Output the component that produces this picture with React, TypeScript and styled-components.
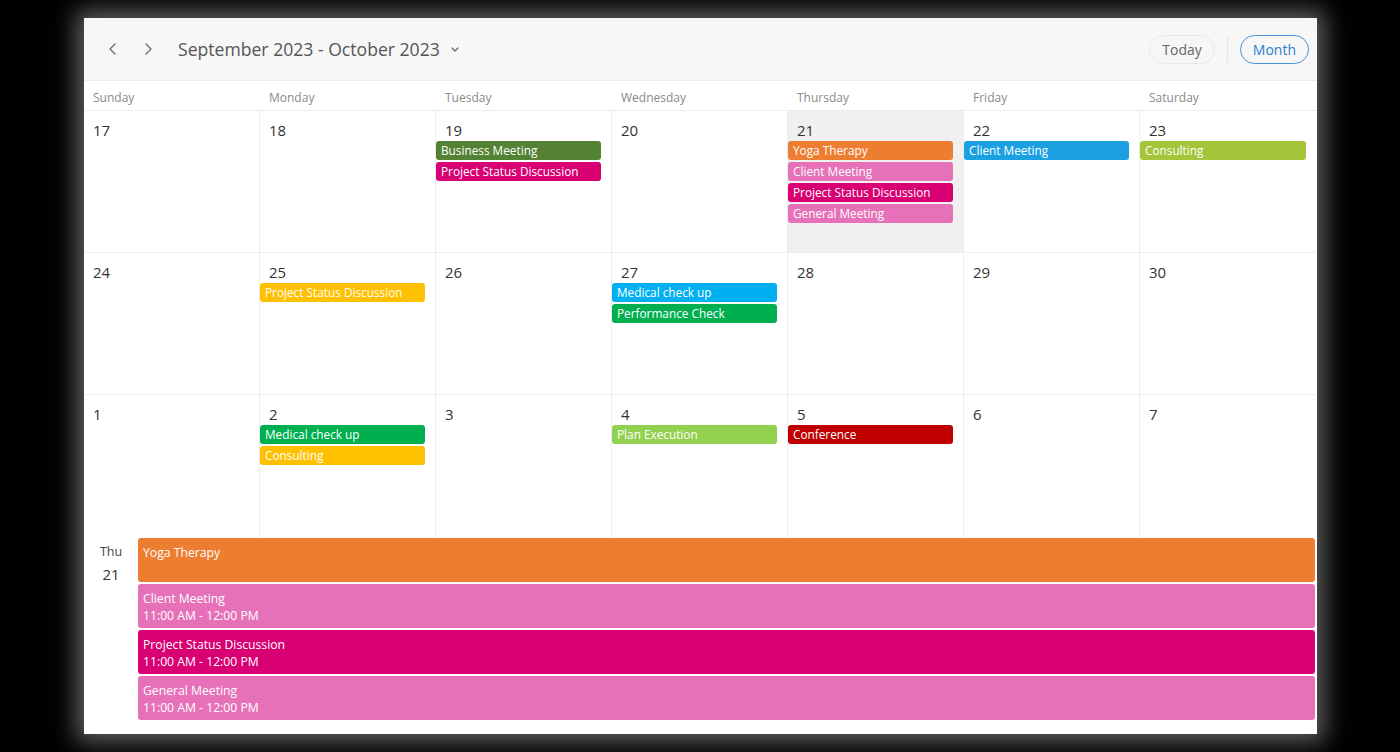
import React from 'react';
import styled, { createGlobalStyle } from 'styled-components';

type CalEvent = { title: string; color: string };
type Day = { date: number; events?: CalEvent[]; today?: boolean };

const C = {
  olive: '#548235',
  magenta: '#d80073',
  orange: '#ed7d31',
  pink: '#e671b8',
  sky: '#1ba1e2',
  lime: '#a4c439',
  amber: '#ffc000',
  cyan: '#00b0f0',
  green: '#00b050',
  light: '#92d050',
  red: '#c00000',
};

const weekDays = ['Sunday', 'Monday', 'Tuesday', 'Wednesday', 'Thursday', 'Friday', 'Saturday'];

const weeks: Day[][] = [
  [
    { date: 17 },
    { date: 18 },
    {
      date: 19,
      events: [
        { title: 'Business Meeting', color: C.olive },
        { title: 'Project Status Discussion', color: C.magenta },
      ],
    },
    { date: 20 },
    {
      date: 21,
      today: true,
      events: [
        { title: 'Yoga Therapy', color: C.orange },
        { title: 'Client Meeting', color: C.pink },
        { title: 'Project Status Discussion', color: C.magenta },
        { title: 'General Meeting', color: C.pink },
      ],
    },
    { date: 22, events: [{ title: 'Client Meeting', color: C.sky }] },
    { date: 23, events: [{ title: 'Consulting', color: C.lime }] },
  ],
  [
    { date: 24 },
    { date: 25, events: [{ title: 'Project Status Discussion', color: C.amber }] },
    { date: 26 },
    {
      date: 27,
      events: [
        { title: 'Medical check up', color: C.cyan },
        { title: 'Performance Check', color: C.green },
      ],
    },
    { date: 28 },
    { date: 29 },
    { date: 30 },
  ],
  [
    { date: 1 },
    {
      date: 2,
      events: [
        { title: 'Medical check up', color: C.green },
        { title: 'Consulting', color: C.amber },
      ],
    },
    { date: 3 },
    { date: 4, events: [{ title: 'Plan Execution', color: C.light }] },
    { date: 5, events: [{ title: 'Conference', color: C.red }] },
    { date: 6 },
    { date: 7 },
  ],
];

const agenda = [
  { title: 'Yoga Therapy', color: C.orange },
  { title: 'Client Meeting', time: '11:00 AM - 12:00 PM', color: C.pink },
  { title: 'Project Status Discussion', time: '11:00 AM - 12:00 PM', color: C.magenta },
  { title: 'General Meeting', time: '11:00 AM - 12:00 PM', color: C.pink },
];

function Chevron({ dir }: { dir: 'left' | 'right' | 'down' }) {
  const points =
    dir === 'left' ? '9,3 4,8 9,13' : dir === 'right' ? '5,3 10,8 5,13' : '4,6 7,9 10,6';
  const size = dir === 'down' ? 14 : 16;
  return (
    <svg width={size} height={size} viewBox={`0 0 ${size} ${size}`} fill="none">
      <polyline points={points} stroke="#666" strokeWidth="1.2" strokeLinecap="round" strokeLinejoin="round" />
    </svg>
  );
}

export default function App() {
  return (
    <>
      <GlobalStyle />
      <Page>
        <Card>
          <Toolbar>
            <NavButton>
              <Chevron dir="left" />
            </NavButton>
            <NavButton>
              <Chevron dir="right" />
            </NavButton>
            <Title>September 2023 - October 2023</Title>
            <Caret>
              <Chevron dir="down" />
            </Caret>
            <Spacer />
            <PillButton>Today</PillButton>
            <Divider />
            <PillButton active>Month</PillButton>
          </Toolbar>

          <DayNames>
            {weekDays.map((d) => (
              <DayName key={d}>{d}</DayName>
            ))}
          </DayNames>

          <MonthGrid>
            {weeks.flat().map((day, i) => (
              <Cell key={i} today={day.today} lastCol={i % 7 === 6} lastRow={i >= 14}>
                <DateNum>{day.date}</DateNum>
                {day.events?.map((ev, j) => (
                  <Chip key={j} color={ev.color}>
                    {ev.title}
                  </Chip>
                ))}
              </Cell>
            ))}
          </MonthGrid>

          <Agenda>
            <AgendaDate>
              <span>Thu</span>
              <AgendaDay>21</AgendaDay>
            </AgendaDate>
            <AgendaList>
              {agenda.map((ev, i) => (
                <AgendaItem key={i} color={ev.color}>
                  <div>{ev.title}</div>
                  {ev.time && <div>{ev.time}</div>}
                </AgendaItem>
              ))}
            </AgendaList>
          </Agenda>
        </Card>
      </Page>
    </>
  );
}

const GlobalStyle = createGlobalStyle`
  html, body {
    margin: 0;
    padding: 0;
    background: #000;
    font-family: "Segoe UI", "Open Sans", "Noto Sans", sans-serif;
  }
  * { box-sizing: border-box; }
`;

const Page = styled.div`
  width: 1400px;
  height: 752px;
  padding: 18px 83px 18px 84px;
  background: #000;
  overflow: hidden;
`;

const Card = styled.div`
  width: 1233px;
  height: 716px;
  background: #fff;
  display: flex;
  flex-direction: column;
  box-shadow: 0 0 22px 8px rgba(190, 190, 190, 0.5);
`;

const Toolbar = styled.div`
  height: 63px;
  flex: none;
  background: #f7f7f7;
  border-bottom: 1px solid #ececec;
  display: flex;
  align-items: center;
  padding: 0 8px 0 16px;
`;

const NavButton = styled.div`
  width: 28px;
  height: 28px;
  margin-right: 7px;
  display: flex;
  align-items: center;
  justify-content: center;
`;

const Title = styled.div`
  margin-left: 8px;
  font-size: 17.6px;
  color: #555;
`;

const Caret = styled.div`
  margin-left: 8px;
  display: flex;
  align-items: center;
`;

const Spacer = styled.div`
  flex: 1;
`;

const PillButton = styled.div<{ active?: boolean }>`
  height: 29px;
  padding: 0 12px;
  border-radius: 15px;
  display: flex;
  align-items: center;
  font-size: 14px;
  color: ${(p) => (p.active ? '#2b7fd0' : '#666')};
  border: 1px solid ${(p) => (p.active ? '#4a92d6' : '#e8e8e8')};
`;

const Divider = styled.div`
  width: 1px;
  height: 26px;
  background: #e4e4e4;
  margin: 0 12px;
`;

const DayNames = styled.div`
  height: 30px;
  flex: none;
  display: grid;
  grid-template-columns: repeat(7, 176px);
  border-bottom: 1px solid #ececec;
`;

const DayName = styled.div`
  padding: 3px 0 0 9px;
  display: flex;
  align-items: center;
  font-size: 12px;
  color: #8a8a8a;
`;

const MonthGrid = styled.div`
  flex: none;
  display: grid;
  grid-template-columns: repeat(7, 176px);
  grid-template-rows: repeat(3, 142px);
`;

const Cell = styled.div<{ today?: boolean; lastCol?: boolean; lastRow?: boolean }>`
  background: ${(p) => (p.today ? '#f0f0f0' : '#fff')};
  border-right: ${(p) => (p.lastCol ? 'none' : '1px solid #ededed')};
  border-bottom: ${(p) => (p.lastRow ? 'none' : '1px solid #ededed')};
  padding: 9px 10px 0 0;
  display: flex;
  flex-direction: column;
  gap: 2px;
`;

const DateNum = styled.div`
  padding-left: 9px;
  height: 19px;
  font-size: 15px;
  line-height: 20px;
  color: #333;
`;

const Chip = styled.div<{ color: string }>`
  height: 19px;
  border-radius: 3px;
  background: ${(p) => p.color};
  color: #fff;
  font-size: 11.8px;
  line-height: 19px;
  padding-left: 5px;
  white-space: nowrap;
  overflow: hidden;
`;

const Agenda = styled.div`
  flex: 1;
  display: flex;
  padding: 1px 2px 0 0;
`;

const AgendaDate = styled.div`
  width: 54px;
  flex: none;
  display: flex;
  flex-direction: column;
  align-items: center;
  padding-top: 5px;
  font-size: 12.5px;
  color: #444;
`;

const AgendaDay = styled.span`
  margin-top: 4px;
  font-size: 15px;
  color: #333;
`;

const AgendaList = styled.div`
  flex: 1;
  display: flex;
  flex-direction: column;
  gap: 2px;
`;

const AgendaItem = styled.div<{ color: string }>`
  height: 44px;
  border-radius: 3px;
  background: ${(p) => p.color};
  color: #fff;
  font-size: 12.2px;
  line-height: 17px;
  padding: 6px 5px 0;
`;
